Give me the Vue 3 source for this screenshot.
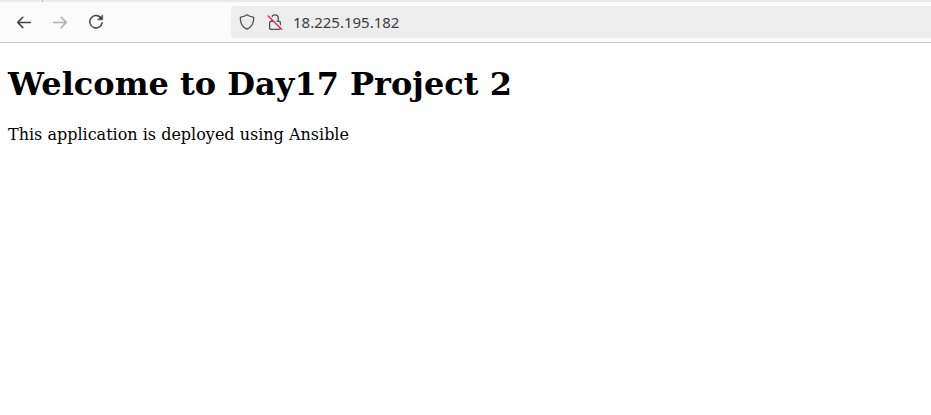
<script setup>
import { ref } from 'vue'

const address = ref('18.225.195.182')
</script>

<template>
  <div class="browser">
    <div class="tab-strip"><span class="tab-edge"></span></div>
    <header class="toolbar">
      <nav class="nav-buttons" aria-label="History">
        <button type="button" class="nav-button" aria-label="Back">
          <svg viewBox="0 0 16 16" class="icon">
            <path d="M14.4 8.4H2M6.8 3.2L1.7 8.4L6.8 13.6" />
          </svg>
        </button>
        <button type="button" class="nav-button" aria-label="Forward" disabled>
          <svg viewBox="0 0 16 16" class="icon">
            <path d="M1.6 8.4H14M9.2 3.2L14.3 8.4L9.2 13.6" />
          </svg>
        </button>
        <button type="button" class="nav-button" aria-label="Reload">
          <svg viewBox="0 0 16 16" class="icon">
            <path d="M12.4 3.4A6.2 6.2 0 1 0 14.1 8.8" />
            <path class="solid" d="M14.7 1.2V5.8H9.8Z" />
          </svg>
        </button>
      </nav>
      <form class="address-bar" @submit.prevent>
        <button type="button" class="address-button" aria-label="Tracking protection">
          <svg viewBox="0 0 16 16" class="icon">
            <path class="fine" d="M8 .8C6.2 2.1 4 2.8 1.9 3.1Q1.3 3.2 1.3 3.9C1.3 9 3.4 13.1 8 15.2C12.6 13.1 14.7 9 14.7 3.9Q14.7 3.2 14.1 3.1C12 2.8 9.8 2.1 8 .8Z" />
          </svg>
        </button>
        <button type="button" class="address-button" aria-label="Connection not secure">
          <svg viewBox="0 0 16 16" class="icon">
            <path class="fine" d="M4.7 7.4V4.1A3.3 3.3 0 0 1 11.3 4.1V7.4M4 7.4H12Q13.4 7.4 13.4 8.8V13.9Q13.4 15.3 12 15.3H4Q2.6 15.3 2.6 13.9V8.8Q2.6 7.4 4 7.4Z" />
            <path class="gap" d="M2.2 1.2L15.6 14.6" />
            <path class="slash" d="M1.2 2L14.8 15.6" />
          </svg>
        </button>
        <input v-model="address" class="address-input" type="text" aria-label="Address" spellcheck="false" />
      </form>
    </header>
    <main class="page">
      <h1>Welcome to Day17 Project 2</h1>
      <p>This application is deployed using Ansible</p>
    </main>
  </div>
</template>

<style>
body {
  background: #fff;
}
</style>

<style scoped>
.tab-strip {
  display: flex;
  height: 2px;
  padding-left: 42px;
  background: #ebebeb;
}

.tab-edge {
  width: 1px;
  background: #b8b8b8;
}

.toolbar {
  display: flex;
  align-items: center;
  gap: 117px;
  height: 40px;
  padding-left: 6px;
  background: #fbfbfb;
  border-bottom: 1px solid #c8c8c8;
}

.nav-buttons {
  display: flex;
}

button {
  display: flex;
  align-items: center;
  justify-content: center;
  padding: 0;
  border: 0;
  background: none;
  color: #444;
}

.nav-button {
  width: 36px;
  height: 32px;
}

.nav-button:disabled {
  color: #b2b2b2;
}

.icon {
  width: 16px;
  height: 16px;
  fill: none;
  stroke: currentColor;
  stroke-width: 1.5;
  stroke-linecap: round;
  stroke-linejoin: round;
}

.fine {
  stroke: #505050;
  stroke-width: 1.3;
}

.solid {
  fill: currentColor;
  stroke-width: 0.6;
}

.gap {
  stroke: #ededed;
  stroke-width: 1.6;
}

.slash {
  stroke: #f0285a;
  stroke-width: 1.4;
}

.address-bar {
  display: flex;
  flex: 1;
  align-items: center;
  min-width: 0;
  height: 32px;
  padding-left: 2px;
  background: #ededed;
  border-radius: 4px 0 0 4px;
}

.address-button {
  width: 28px;
  height: 28px;
}

.address-input {
  flex: 1;
  min-width: 0;
  padding: 0 0 0 4px;
  border: 0;
  outline: 0;
  background: none;
  color: #404040;
  font: 15px/20px "Noto Sans", sans-serif;
}

.page {
  padding: 1px 8px 0;
  color: #000;
  font-family: "DejaVu Serif", serif;
  font-size: 16px;
}

h1 {
  margin: 0;
  padding: 22px 0;
  font-size: 32px;
  line-height: 37px;
}

p {
  margin: 0;
  line-height: 19px;
}
</style>
